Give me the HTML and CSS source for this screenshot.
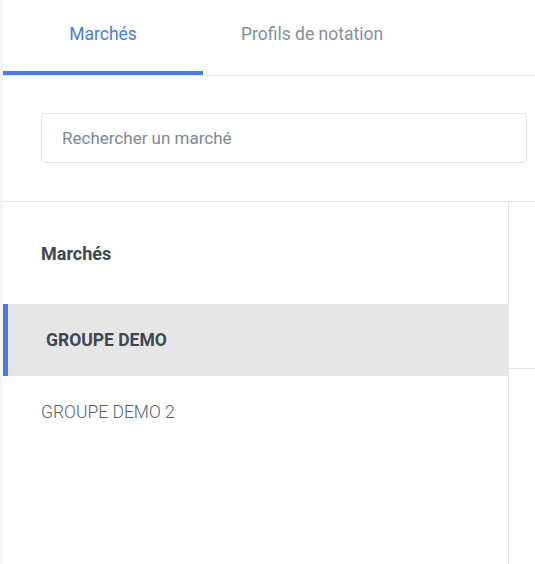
FILE: index.html
```html
<!DOCTYPE html>
<html lang="fr">
<head>
<meta charset="utf-8">
<title>Marchés</title>
<link rel="stylesheet" href="styles.css">
</head>
<body>
<div class="app">
  <nav class="tabs">
    <div class="tab tab-active">Marchés</div>
    <div class="tab tab-second">Profils de notation</div>
  </nav>
  <div class="search-wrap">
    <input class="search" type="text" placeholder="Rechercher un marché">
  </div>
  <div class="main">
    <div class="list">
      <div class="list-header">Marchés</div>
      <div class="row row-selected">GROUPE DEMO</div>
      <div class="row">GROUPE DEMO 2</div>
    </div>
    <div class="side">
      <div class="side-top"></div>
    </div>
  </div>
</div>
</body>
</html>
```

FILE: styles.css
```css
html, body {
  margin: 0;
  padding: 0;
  height: 100%;
}
body {
  background: #f4f4f4;
  font-family: Roboto, "Liberation Sans", sans-serif;
  overflow: hidden;
}
.app {
  margin-left: 3px;
  background: #ffffff;
  height: 564px;
  display: flex;
  flex-direction: column;
}
.tabs {
  display: flex;
  border-bottom: 1px solid #e6e6e6;
  height: 76px;
  box-sizing: border-box;
}
.tab {
  font-size: 17.5px;
  line-height: 20px;
  padding-top: 24px;
  color: #85909b;
  box-sizing: border-box;
  height: 75px;
}
.tab-active {
  width: 200px;
  text-align: center;
  color: #4a7ddb;
  border-bottom: 4px solid #4a7ddb;
}
.tab-second {
  padding-left: 38px;
}
.search-wrap {
  padding: 37px 8px 38px 38px;
  border-bottom: 1px solid #e6e6e6;
}
.search {
  display: block;
  width: 100%;
  box-sizing: border-box;
  height: 50px;
  border: 1px solid #e3e3e3;
  border-radius: 4px;
  padding: 0 20px;
  font-family: Roboto, "Liberation Sans", sans-serif;
  font-size: 17px;
  color: #3b4754;
  outline: none;
}
.search::placeholder {
  color: #7d8995;
}
.main {
  flex: 1;
  display: flex;
}
.list {
  width: 505px;
  border-right: 1px solid #e6e6e6;
}
.list-header {
  height: 102px;
  display: flex;
  align-items: center;
  padding-left: 38px;
  font-size: 18px;
  font-weight: 700;
  color: #3b4754;
}
.row {
  height: 72px;
  display: flex;
  align-items: center;
  padding-left: 38px;
  font-size: 17.5px;
  font-weight: 300;
  color: #56636f;
}
.row-selected {
  background: #e6e6e6;
  border-left: 5px solid #4a7ddb;
  font-weight: 700;
  color: #3b4754;
}
.side {
  flex: 1;
}
.side-top {
  height: 166px;
  border-bottom: 1px solid #e6e6e6;
}
```
